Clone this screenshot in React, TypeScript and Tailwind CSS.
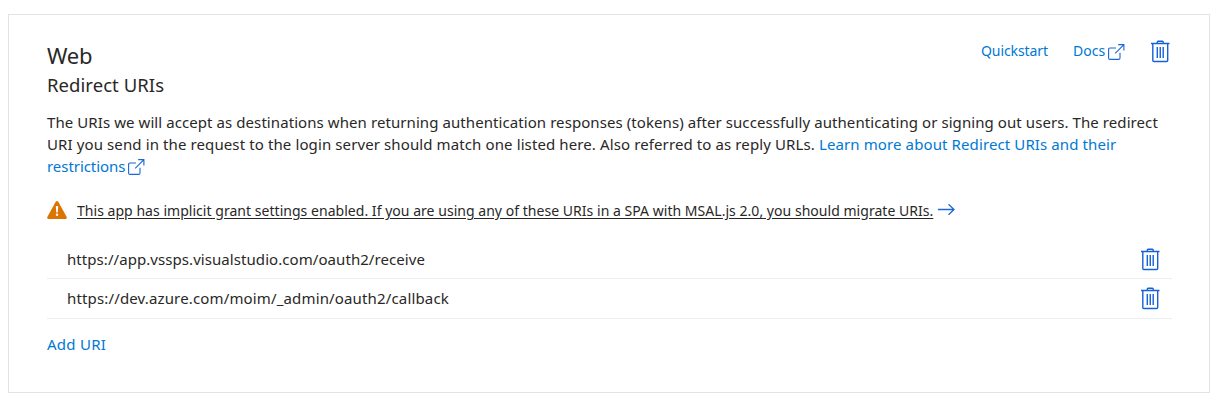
import React from "react";

function ExternalIcon() {
  return (
    <svg className="h-4 w-[17px] shrink-0" viewBox="0 0 17 16" fill="none" stroke="#1a66da" strokeWidth="1.1">
      <path d="M8 4H2Q.6 4 .6 5.4V14Q.6 15.4 2 15.4H10.6Q12 15.4 12 14V8.8" />
      <path d="M10.2.6H15.9V6.4M15.9.6L7.2 9.4" />
    </svg>
  );
}

function TrashIcon() {
  return (
    <svg className="h-[23px] w-[19px] shrink-0" viewBox="0 0 19 23" fill="none" stroke="#1561d6" strokeWidth="1.4">
      <path d="M0 3.5H18.5M6.3 3.2V2Q6.3 1.2 7.1 1.2H11.4Q12.2 1.2 12.2 2V3.2" />
      <path d="M1.8 3.5V20.4Q1.8 21.5 2.9 21.5H15.6Q16.7 21.5 16.7 20.4V3.5" />
      <path d="M6.3 7V18M9.25 7V18M12.2 7V18" />
    </svg>
  );
}

function WarningIcon() {
  return (
    <svg className="h-[18px] w-5 shrink-0" viewBox="0 0 20 18">
      <path d="M8.7.8Q10-.6 11.3.8L19.7 16Q20.3 17.9 18.6 18H1.4Q-.3 17.9.3 16Z" fill="#db7500" />
      <path d="M8.8 5H11.2L10.8 11.5H9.2Z" fill="#fff" />
      <circle cx="10" cy="13.8" r="1.2" fill="#fff" />
    </svg>
  );
}

function ArrowIcon() {
  return (
    <svg className="h-3 w-[17px] shrink-0" viewBox="0 0 17 12" fill="none" stroke="#1a66da" strokeWidth="1.3">
      <path d="M0 5.5H16M10.5.3L16 5.5L10.5 10.7" />
    </svg>
  );
}

function UriRow({ uri, className }: { uri: string; className: string }) {
  return (
    <div className={`flex items-center justify-between border-b border-[#eeeeee] pr-3 pl-5 ${className}`}>
      <span className="pb-px">{uri}</span>
      <button aria-label="Delete URI"><TrashIcon /></button>
    </div>
  );
}

export default function App() {
  return (
    <main className="h-[401px] bg-white pt-3.5 pl-2 font-['Noto_Sans','Open_Sans',sans-serif] text-[15px] leading-[22px] text-[#292827]">
      <section className="h-[379px] w-[1202px] border border-[#e3e3e3] pt-[25px] pr-[37px] pl-[38px]">
        <header className="flex h-[59px] justify-between">
          <div className="pt-px">
            <h1 className="text-[22px] leading-[29px] tracking-[-0.2px]">Web</h1>
            <h2 className="pt-px text-[18.5px] leading-7 tracking-[0.06px]">Redirect URIs</h2>
          </div>
          <nav className="flex h-[23px] items-center pr-0.5 text-sm text-[#0078d4]">
            <a className="w-[92px] pb-0.5 tracking-[-0.1px]">Quickstart</a>
            <a className="flex w-[78px] items-center gap-[3px]"><span className="pb-0.5">Docs</span><ExternalIcon /></a>
            <button aria-label="Delete platform"><TrashIcon /></button>
          </nav>
        </header>
        <p className="mt-3 whitespace-nowrap">
          <span className="block tracking-[0.077px]">The URIs we will accept as destinations when returning authentication responses (tokens) after successfully authenticating or signing out users. The redirect</span>
          <span className="block tracking-[0.11px]">URI you send in the request to the login server should match one listed here. Also referred to as reply URLs. <a className="text-[#0078d4]">Learn more about Redirect URIs and their</a></span>
          <a className="flex items-center gap-[3px] text-[#0078d4]"><span className="tracking-[-0.05px]">restrictions</span><span className="pt-0.5"><ExternalIcon /></span></a>
        </p>
        <div className="mt-[21px] flex h-[23px] items-center whitespace-nowrap text-sm">
          <WarningIcon />
          <a className="ml-2.5 pt-0.5 tracking-[0.034px] underline underline-offset-2">This app has implicit grant settings enabled. If you are using any of these URIs in a SPA with MSAL.js 2.0, you should migrate URIs.</a>
          <span className="ml-[5px]"><ArrowIcon /></span>
        </div>
        <div className="mt-[19px]">
          <UriRow uri="https://app.vssps.visualstudio.com/oauth2/receive" className="h-[39px] tracking-[0.065px]" />
          <UriRow uri="https://dev.azure.com/moim/_admin/oauth2/callback" className="h-10 tracking-[0.15px]" />
        </div>
        <button className="mt-3.5 tracking-[0.25px] text-[#0078d4]">Add URI</button>
      </section>
    </main>
  );
}
